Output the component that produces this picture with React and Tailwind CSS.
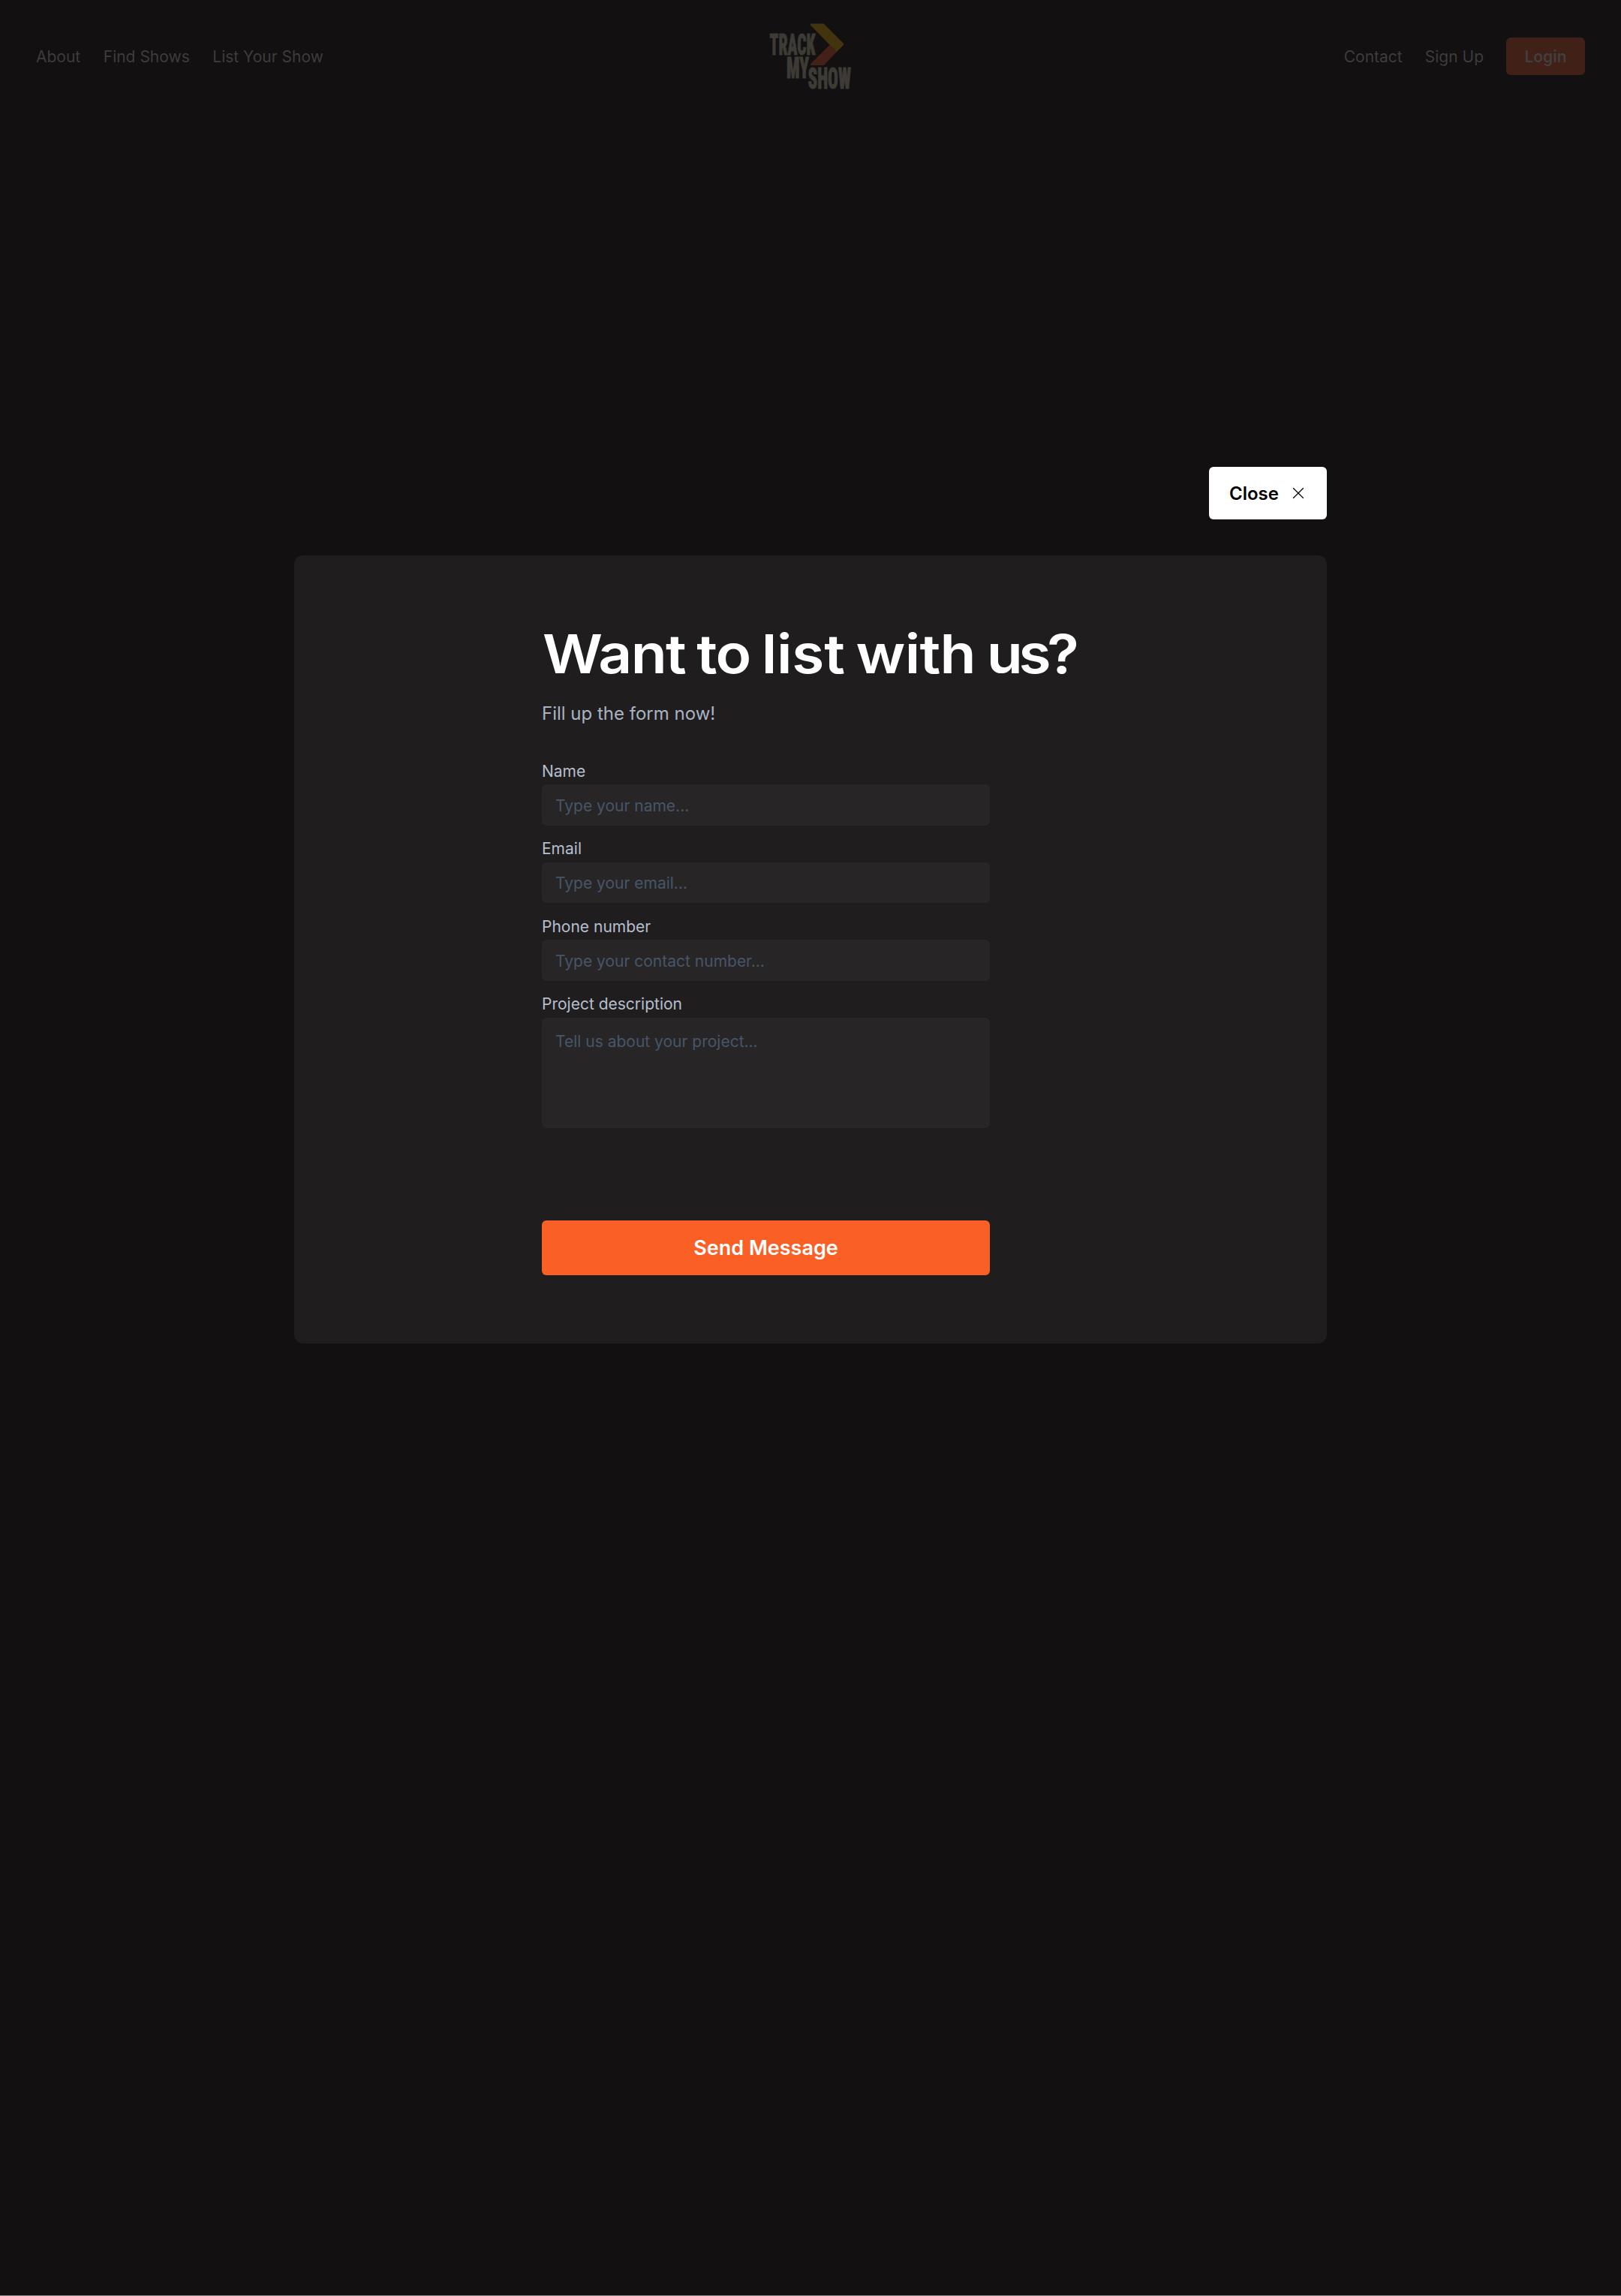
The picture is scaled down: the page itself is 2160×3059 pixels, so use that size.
function Logo() {
  return (
    <svg className="overflow-visible" width="112" height="92" viewBox="1024 29 112 92" aria-label="Track My Show">
      <path d="M1080 31.5H1097.5L1124 58V60L1114.7 69.2L1080 33.5Z" fill="#433410" />
      <path d="M1105.7 59.7L1114.7 69.2L1098 87H1080V85Z" fill="#432018" />
      <g
        fontFamily="Roboto, Inter, sans-serif"
        fontWeight="900"
        fontStretch="75%"
        fontSize="39"
        fill="#3d3b36"
        stroke="#3d3b36"
        strokeWidth="1"
      >
        <text x="1025.5" y="73" textLength="61" lengthAdjust="spacingAndGlyphs">TRACK</text>
        <text x="1048" y="104" textLength="30" lengthAdjust="spacingAndGlyphs">MY</text>
        <text x="1076.5" y="117.7" textLength="57.5" lengthAdjust="spacingAndGlyphs">SHOW</text>
      </g>
    </svg>
  );
}

const fields = [
  { label: "Name", hint: "Type your name..." },
  { label: "Email", hint: "Type your email..." },
  { label: "Phone number", hint: "Type your contact number..." },
];

export default function App() {
  return (
    <div className="h-[3059px] w-[2160px] overflow-hidden border-b border-[#8a8889] bg-[#121011] font-['Inter',sans-serif] text-[21px] leading-[30px]">
      <header className="grid h-[150px] grid-cols-[1fr_auto_1fr] items-center px-12 text-[#3e3c3d]">
        <nav className="flex gap-[30.5px] pt-[2px]">
          <a>About</a>
          <a>Find Shows</a>
          <a>List Your Show</a>
        </nav>
        <Logo />
        <nav className="flex items-center justify-end gap-[30px]">
          <a className="pt-[2px]">Contact</a>
          <a className="pt-[2px]">Sign Up</a>
          <button className="h-[50px] w-[105px] rounded-[6px] bg-[#402017] pt-[2px] font-semibold text-[#413f40]">
            Login
          </button>
        </nav>
      </header>

      <main className="ml-[391.5px] flex w-[1376.5px] flex-col pt-[472px]">
        <button className="flex h-[69.5px] w-[157px] items-center self-end rounded-[6px] bg-white pt-[2px] pl-[27px] text-[24px] font-semibold text-black">
          Close
          <svg className="mb-px ml-[18px]" width="16" height="16" viewBox="0 0 16 16" fill="none" stroke="#000" strokeWidth="1.3">
            <path d="M1.2 1.2L14.8 14.8M14.8 1.2L1.2 14.8" />
          </svg>
        </button>

        <section className="mt-[48px] h-[1050px] rounded-[12px] bg-[#1f1d1e] pl-[330.5px]">
          <h1 className="ml-px origin-left scale-x-[1.09] pt-[86px] text-[72px] leading-[90px] font-semibold tracking-[-0.02em] text-white [word-spacing:-3px]">
            Want to <span className="tracking-[-0.003em]">list</span> <span className="tracking-[-0.01em]">with</span>{" "}
            <span className="tracking-[-0.068em]">us?</span>
          </h1>
          <p className="mt-[17px] text-[24px] leading-[36px] text-[#a9b3c3]">Fill up the form now!</p>
          <form className="mt-[43px] w-[597px]">
            {fields.map((f) => (
              <label key={f.label} className="mb-[15.5px] block text-[#b6becd]">
                <span className="block h-[33.5px] pt-px">{f.label}</span>
                <input
                  className="block h-[54.5px] w-full rounded-[6px] bg-[#272526] px-[18px] pt-[2px] placeholder:text-[#475569]"
                  placeholder={f.hint}
                />
              </label>
            ))}
            <label className="block text-[#b6becd]">
              <span className="block h-[33.5px] pt-px">Project description</span>
              <textarea
                className="block h-[147px] w-full resize-none rounded-[6px] bg-[#272526] px-[18px] py-[17px] placeholder:text-[#475569]"
                placeholder="Tell us about your project..."
              />
            </label>
            <button className="mt-[123px] h-[73.5px] w-full rounded-[6px] bg-[#fa5f26] pt-[2px] text-[27px] font-semibold text-white">
              Send Message
            </button>
          </form>
        </section>
      </main>
    </div>
  );
}
